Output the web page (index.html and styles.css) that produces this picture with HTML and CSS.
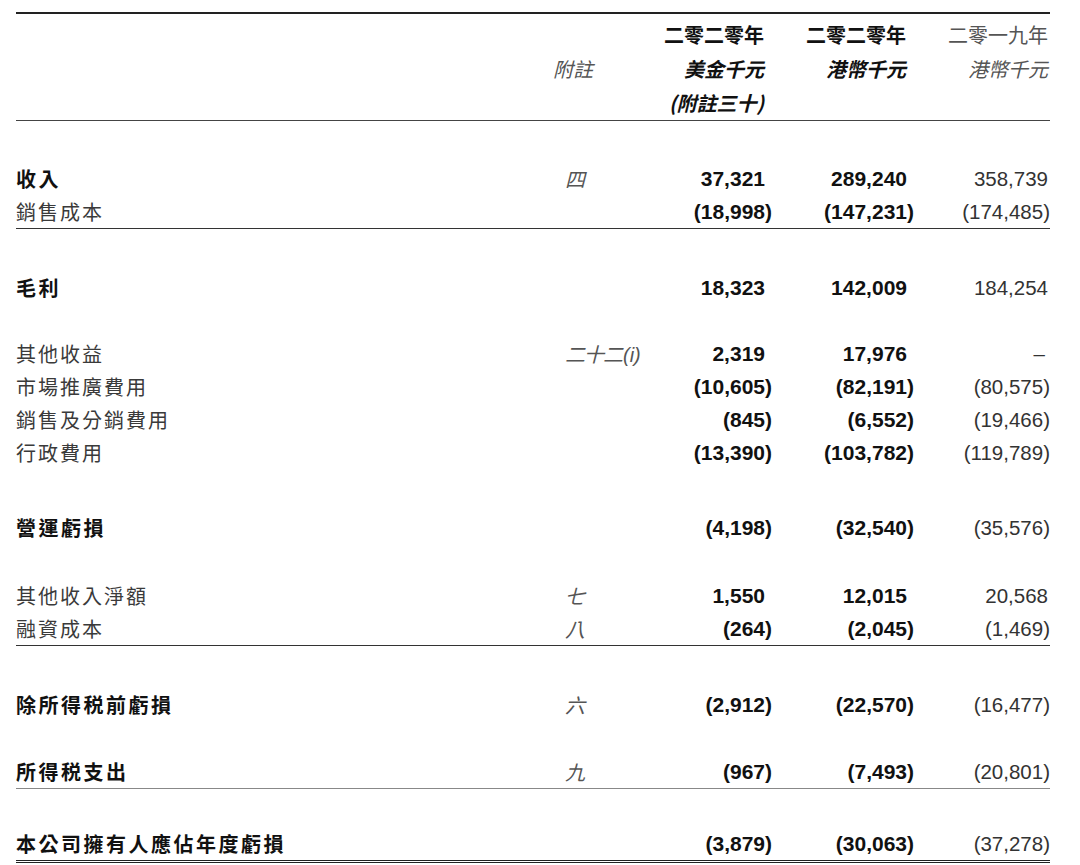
FILE: index.html
```html
<!DOCTYPE html>
<html lang="zh-Hant">
<head>
<meta charset="utf-8">
<title>綜合損益表</title>
<link rel="stylesheet" href="styles.css">
</head>
<body>
<div class="sheet">
  <div class="head">
    <div class="hrow">
      <span class="lab"></span><span class="hnote"></span>
      <span class="hc c1">二零二零年</span><span class="hc c2">二零二零年</span><span class="hc c3">二零一九年</span>
    </div>
    <div class="hrow">
      <span class="lab"></span><span class="hnote it">附註</span>
      <span class="hc c1 it">美金千元</span><span class="hc c2 it">港幣千元</span><span class="hc c3 it">港幣千元</span>
    </div>
    <div class="hrow">
      <span class="lab"></span><span class="hnote"></span>
      <span class="hc c1 it">(附註三十)</span><span class="hc c2"></span><span class="hc c3"></span>
    </div>
  </div>

  <div class="row strong g41">
    <span class="lab">收入</span><span class="note">四</span>
    <span class="num c1 p">37,321</span><span class="num c2 p">289,240</span><span class="num c3 p">358,739</span>
  </div>
  <div class="row rule">
    <span class="lab">銷售成本</span><span class="note"></span>
    <span class="num c1">(18,998)</span><span class="num c2">(147,231)</span><span class="num c3">(174,485)</span>
  </div>

  <div class="row strong g42">
    <span class="lab">毛利</span><span class="note"></span>
    <span class="num c1 p">18,323</span><span class="num c2 p">142,009</span><span class="num c3 p">184,254</span>
  </div>

  <div class="row g33">
    <span class="lab">其他收益</span><span class="note">二十二<span class="latin">(i)</span></span>
    <span class="num c1 p">2,319</span><span class="num c2 p">17,976</span><span class="num c3 dash">–</span>
  </div>
  <div class="row">
    <span class="lab">市場推廣費用</span><span class="note"></span>
    <span class="num c1">(10,605)</span><span class="num c2">(82,191)</span><span class="num c3">(80,575)</span>
  </div>
  <div class="row">
    <span class="lab">銷售及分銷費用</span><span class="note"></span>
    <span class="num c1">(845)</span><span class="num c2">(6,552)</span><span class="num c3">(19,466)</span>
  </div>
  <div class="row">
    <span class="lab">行政費用</span><span class="note"></span>
    <span class="num c1">(13,390)</span><span class="num c2">(103,782)</span><span class="num c3">(119,789)</span>
  </div>

  <div class="row strong g42">
    <span class="lab">營運虧損</span><span class="note"></span>
    <span class="num c1">(4,198)</span><span class="num c2">(32,540)</span><span class="num c3">(35,576)</span>
  </div>

  <div class="row g35">
    <span class="lab">其他收入淨額</span><span class="note">七</span>
    <span class="num c1 p">1,550</span><span class="num c2 p">12,015</span><span class="num c3 p">20,568</span>
  </div>
  <div class="row rule">
    <span class="lab">融資成本</span><span class="note">八</span>
    <span class="num c1">(264)</span><span class="num c2">(2,045)</span><span class="num c3">(1,469)</span>
  </div>

  <div class="row strong g42">
    <span class="lab">除所得税前虧損</span><span class="note">六</span>
    <span class="num c1">(2,912)</span><span class="num c2">(22,570)</span><span class="num c3">(16,477)</span>
  </div>

  <div class="row strong rule-light g34">
    <span class="lab">所得税支出</span><span class="note">九</span>
    <span class="num c1">(967)</span><span class="num c2">(7,493)</span><span class="num c3">(20,801)</span>
  </div>

  <div class="row strong rule-double g38">
    <span class="lab">本公司擁有人應佔年度虧損</span><span class="note"></span>
    <span class="num c1">(3,879)</span><span class="num c2">(30,063)</span><span class="num c3">(37,278)</span>
  </div>
</div>
</body>
</html>
```

FILE: styles.css
```css
html, body {
  margin: 0;
  padding: 0;
  background: #ffffff;
}

.sheet {
  width: 1034px;
  margin-left: 16px;
  padding-top: 12px;
  font-family: "Noto Sans CJK TC", "Noto Sans CJK SC", sans-serif;
  font-size: 20px;
  color: #3a3a3a;
}

.head {
  border-top: 2px solid #222222;
  border-bottom: 1px solid #444444;
  padding-top: 4px;
}

.hrow,
.row {
  display: grid;
  grid-template-columns: 537px 97px 122px 142px 136px;
  white-space: nowrap;
}

.hrow {
  height: 34px;
  line-height: 34px;
}

.row {
  height: 33px;
  line-height: 33px;
}

.it {
  font-style: italic;
}

.hnote {
  color: #555555;
}

.hc {
  text-align: right;
}

.hc.c1,
.hc.c2 {
  font-weight: 700;
  color: #111111;
  padding-right: 8px;
}

.hc.c3 {
  color: #555555;
  padding-right: 2px;
}

.lab {
  letter-spacing: 2px;
}

.row.strong .lab {
  font-weight: 700;
  color: #111111;
  letter-spacing: 2.5px;
}

.note {
  font-style: italic;
  color: #555555;
  padding-left: 12px;
  letter-spacing: -1px;
}

.note .latin {
  font-family: "Liberation Sans", Arial, sans-serif;
  letter-spacing: 0;
  margin-left: 1px;
}

.num {
  font-family: "Liberation Sans", Arial, sans-serif;
  text-align: right;
}

.num.c1,
.num.c2 {
  font-size: 21px;
  font-weight: 700;
  color: #111111;
}

.num.c3 {
  font-size: 20.5px;
  color: #333333;
}

.num.c1.p,
.num.c2.p {
  padding-right: 7px;
}

.num.c3.p {
  padding-right: 2px;
}

.num.c3.dash {
  padding-right: 5px;
}

.rule {
  border-bottom: 1px solid #333333;
}

.rule-light {
  border-bottom: 1px solid #888888;
}

.rule-double {
  border-bottom: 3px double #222222;
}

.g33 { margin-top: 33px; }
.g34 { margin-top: 34px; }
.g35 { margin-top: 35px; }
.g38 { margin-top: 38px; }
.g41 { margin-top: 41px; }
.g42 { margin-top: 42px; }
```
